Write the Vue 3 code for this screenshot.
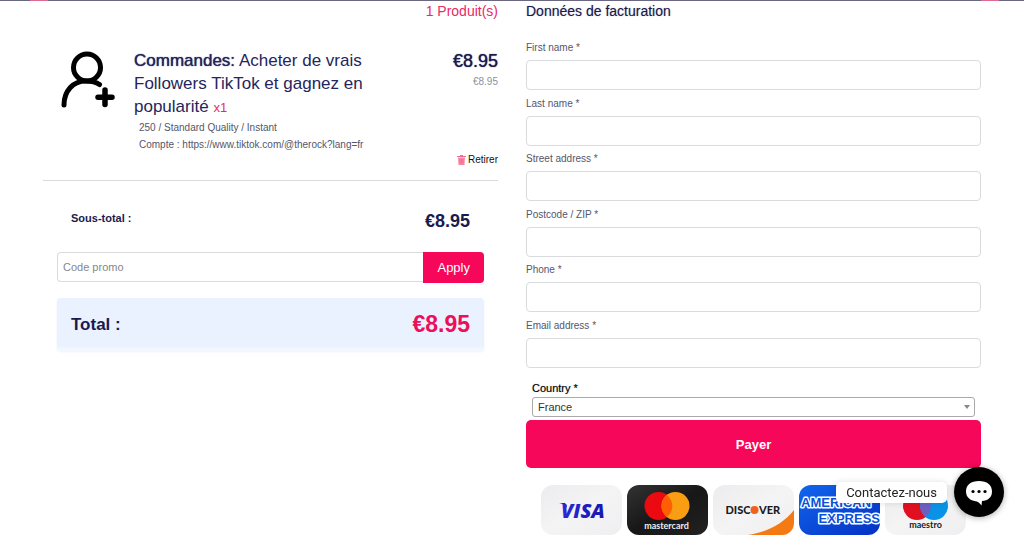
<script setup>
import { ref } from 'vue'

const fields = ref([
  { id: 'first-name', label: 'First name *', type: 'text', value: '' },
  { id: 'last-name', label: 'Last name *', type: 'text', value: '' },
  { id: 'street', label: 'Street address *', type: 'text', value: '' },
  { id: 'postcode', label: 'Postcode / ZIP *', type: 'text', value: '' },
  { id: 'phone', label: 'Phone *', type: 'tel', value: '' },
  { id: 'email', label: 'Email address *', type: 'email', value: '' },
])
const countries = ['France', 'Belgique', 'Suisse', 'Canada']
const country = ref('France')
const promo = ref('')
</script>

<template>
  <div class="page">
    <header class="edge"><i></i><i></i></header>
    <main class="checkout">
      <section class="cart">
        <h2 class="count">1 Produit(s)</h2>
        <article class="item">
          <svg class="avatar" viewBox="0 0 56 60" fill="none" stroke="#000" stroke-width="5" stroke-linecap="round">
            <circle cx="26" cy="18.500" r="13.500" />
            <path d="M3 56C3 42 12 32 25 32c6 0 10 1 13.500 3.500" />
            <path stroke-width="5.500" d="M44 41v14.500M37 48.200h14" />
          </svg>
          <div class="info">
            <h3 class="name"><span class="medium">Commandes:</span> Acheter de vrais Followers TikTok et gagnez en popularité <span class="qty">x1</span></h3>
            <p class="meta">250 / Standard Quality / Instant</p>
            <p class="meta">Compte : https://www.tiktok.com/@therock?lang=fr</p>
          </div>
          <div class="price">
            <span class="now medium">€8.95</span>
            <span class="unit">€8.95</span>
          </div>
        </article>
        <div class="actions">
          <button class="remove" type="button">
            <svg width="9" height="10" viewBox="0 0 9 10">
              <path d="M3 1V0h3v1h3v1H0V1z" fill="#f56a94" />
              <path d="M1 2.600h7L7.500 10h-6z" fill="#fc86a8" />
              <path d="M3 4v4.500M4.500 4v4.500M6 4v4.500" stroke="#ea5580" stroke-width=".5" />
            </svg>
            Retirer
          </button>
        </div>
        <div class="summary">
          <div class="subtotal"><span>Sous-total :</span><strong>€8.95</strong></div>
          <form class="promo" @submit.prevent>
            <input v-model="promo" type="text" placeholder="Code promo" aria-label="Code promo" />
            <button type="submit">Apply</button>
          </form>
          <div class="total"><span>Total :</span><strong>€8.95</strong></div>
        </div>
      </section>

      <section class="billing">
        <h2 class="heading">Données de facturation</h2>
        <form @submit.prevent>
          <div v-for="f in fields" :key="f.id" class="field">
            <label :for="f.id">{{ f.label }}</label>
            <input :id="f.id" v-model="f.value" :type="f.type" />
          </div>
          <div class="country">
            <label for="country">Country *</label>
            <div class="picker">
              <select id="country" v-model="country">
                <option v-for="c in countries" :key="c">{{ c }}</option>
              </select>
              <svg class="caret" width="6" height="4" viewBox="0 0 6 4"><path d="M0 0h6L3 4z" fill="#888" /></svg>
            </div>
          </div>
          <button class="pay" type="submit">Payer</button>
        </form>
        <div class="cards">
          <svg viewBox="0 0 81 50" role="img" aria-label="Visa">
            <defs>
              <linearGradient id="pale" x1="0" y1="0" x2="1" y2="1"><stop offset="0" stop-color="#ececee" /><stop offset=".5" stop-color="#f4f4f5" /><stop offset="1" stop-color="#efeff1" /></linearGradient>
              <linearGradient id="visa" x1="0" y1="0" x2="1" y2="0"><stop offset="0" stop-color="#2a2ad8" /><stop offset="1" stop-color="#1a16b0" /></linearGradient>
            </defs>
            <rect width="81" height="50" rx="12" fill="url(#pale)" />
            <g fill="url(#visa)">
              <path d="M18 18h6l2 3v2l-1-2c-2-1.500-4-2.300-7-3z" />
              <text x="20" y="33" font-family="Open Sans, sans-serif" font-size="20" font-weight="800" font-style="italic">VISA</text>
            </g>
          </svg>
          <svg viewBox="0 0 81 50" role="img" aria-label="Mastercard">
            <defs><linearGradient id="dark" x1="0" y1="0" x2="1" y2="1"><stop offset="0" stop-color="#333" /><stop offset=".5" stop-color="#171717" /><stop offset="1" stop-color="#222" /></linearGradient></defs>
            <rect width="81" height="50" rx="12" fill="url(#dark)" />
            <circle cx="31.500" cy="21" r="14" fill="#eb0a10" />
            <circle cx="48.500" cy="21" r="14" fill="#f99d12" />
            <path d="M40 10a14 14 0 0 1 0 22a14 14 0 0 1 0-22z" fill="#ff5f00" />
            <text x="39.500" y="44" text-anchor="middle" font-family="Lato, sans-serif" font-size="9" font-weight="700" fill="#eee">mastercard</text>
          </svg>
          <svg viewBox="0 0 81 50" role="img" aria-label="Discover">
            <rect width="81" height="50" rx="12" fill="url(#pale)" />
            <path d="M35 50C54 47 70 39 81 25v13a12 12 0 0 1-12 12z" fill="#f47a14" />
            <g font-family="Lato, sans-serif" font-size="11" font-weight="900" fill="#1c1c1e">
              <text x="12.500" y="29">DISC</text>
              <text x="46" y="29">VER</text>
            </g>
            <circle cx="41.500" cy="25" r="4" fill="#f1601c" />
          </svg>
          <svg viewBox="0 0 81 50" role="img" aria-label="American Express">
            <defs>
              <linearGradient id="amex" x1="0" y1="0" x2="1" y2="1"><stop offset="0" stop-color="#1265ee" /><stop offset="1" stop-color="#0431c4" /></linearGradient>
              <clipPath id="amex-clip"><rect width="81" height="50" rx="12" /></clipPath>
            </defs>
            <rect width="81" height="50" rx="12" fill="url(#amex)" />
            <g clip-path="url(#amex-clip)" font-family="Liberation Sans, Arial, sans-serif" font-size="13" font-weight="700" fill="#0b50dc" stroke="#fff" stroke-width="2.800" stroke-linejoin="round" paint-order="stroke">
              <text x="2" y="22">AMERICAN</text>
              <text x="81" y="38" text-anchor="end">EXPRESS</text>
            </g>
          </svg>
          <svg viewBox="0 0 81 50" role="img" aria-label="Maestro">
            <rect width="81" height="50" rx="12" fill="url(#pale)" />
            <circle cx="32" cy="21" r="14" fill="#e01020" />
            <circle cx="49" cy="21" r="14" fill="#0a93e6" />
            <path d="M40.500 10a14 14 0 0 1 0 22a14 14 0 0 1 0-22z" fill="#6c5fc0" />
            <text x="40.500" y="43" text-anchor="middle" font-family="Lato, sans-serif" font-size="9" font-weight="700" fill="#222">maestro</text>
          </svg>
        </div>
      </section>
    </main>

    <aside class="contact">
      <span class="bubble">Contactez-nous</span>
      <button class="chat" type="button" aria-label="Contactez-nous">
        <svg width="28" height="28" viewBox="0 0 28 28">
          <path d="M14 3C6 3 1 7 1 13.500c0 6 4.500 9 9.500 9.700 2 .3 3.500 1 6 4.300l.5-4.400C23 22.500 27 19.500 27 13.500 27 7 22 3 14 3z" fill="#fff" />
          <circle cx="8" cy="13.500" r="1.600" /><circle cx="14" cy="13.500" r="1.600" /><circle cx="20" cy="13.500" r="1.600" />
        </svg>
      </button>
    </aside>
  </div>
</template>

<style>
body {
  margin: 0;
  background: #fff;
}
</style>

<style scoped>
.page {
  font-family: "Liberation Sans", Arial, Helvetica, sans-serif;
  font-size: 10px;
  color: #1b1a4e;
}
.page * {
  box-sizing: border-box;
}
h2, h3, p {
  margin: 0;
  font-weight: 400;
}
button, input, select {
  font-family: inherit;
  margin: 0;
}
.edge {
  display: flex;
  justify-content: space-between;
  height: 1px;
  padding: 0 25px 0 30px;
  background: #6a6783;
}
.edge i {
  width: 18px;
  background: #dc6a92;
}
.checkout {
  display: grid;
  grid-template-columns: 1fr 1fr;
  gap: 28px;
  padding: 0 43px;
}
.count, .heading {
  font-size: 14px;
  line-height: 20px;
}
.count {
  text-align: right;
  color: #e82a66;
}
.heading {
  color: #1b1a4e;
  text-shadow: 0 0 1px #1b1a4e66;
}
.medium {
  text-shadow: 0 0 1px #1b1a4e;
}
.item {
  display: flex;
  margin-top: 28px;
}
.avatar {
  flex: none;
  width: 56px;
  height: 60px;
  margin: 0 17px 0 18px;
}
.info {
  flex: 1;
}
.name {
  font-size: 17px;
  line-height: 23px;
  color: #26255c;
}
.qty {
  font-size: 13px;
  color: #e82a66;
}
.meta {
  padding-left: 5px;
  line-height: 17px;
  color: #54566a;
}
.price {
  display: flex;
  flex-direction: column;
  align-items: flex-end;
  margin-left: 60px;
}
.now {
  font-size: 18px;
  line-height: 24px;
}
.unit {
  line-height: 18px;
  color: #8e8f9c;
}
.actions {
  display: flex;
  justify-content: flex-end;
  padding-bottom: 14px;
  border-bottom: 1px solid #d9dadc;
}
.remove {
  display: flex;
  align-items: center;
  gap: 2px;
  padding: 0;
  border: 0;
  background: none;
  font-size: 10px;
  line-height: 13px;
  color: #111;
}
.summary {
  padding: 27px 14px 0;
}
.subtotal, .total {
  display: flex;
  justify-content: space-between;
  padding: 0 14px;
  font-weight: 700;
}
.subtotal span {
  font-size: 11px;
  line-height: 20px;
}
.subtotal strong {
  font-size: 18px;
  line-height: 26px;
}
.promo {
  display: flex;
  align-items: flex-start;
  margin-top: 18px;
}
.promo input {
  flex: 1;
  min-width: 0;
  height: 30px;
  padding: 0 5px;
  border: 1px solid #d9dbdf;
  border-right: 0;
  border-radius: 4px 0 0 4px;
  font-size: 11px;
  color: #333;
}
.promo input::placeholder {
  color: #85888c;
}
.promo button {
  height: 31px;
  padding: 0 14px;
  border: 0;
  border-radius: 0 4px 4px 0;
  background: #f70759;
  color: #fff;
  font-size: 13px;
}
.total {
  align-items: center;
  height: 53px;
  margin-top: 15px;
  border-radius: 4px;
  background: linear-gradient(#ebf2ff 90%, #f5f9ff);
  box-shadow: 0 1px 3px #ebf2ff;
}
.total span {
  font-size: 17px;
}
.total strong {
  font-size: 23px;
  color: #ec0f5a;
}
.billing form {
  padding-top: 20px;
}
.field {
  margin-bottom: 6px;
}
.field:nth-child(odd) {
  margin-bottom: 7px;
}
.field label {
  display: block;
  margin-bottom: 5px;
  line-height: 14px;
  color: #54566a;
}
.field input {
  display: block;
  width: 100%;
  height: 30px;
  padding: 0 8px;
  border: 1px solid #d9dbdf;
  border-radius: 4px;
  background: #fff;
}
.country {
  padding: 7px 6px 0;
}
.country label {
  display: block;
  margin-bottom: 2px;
  font-size: 11px;
  line-height: 14px;
  color: #000;
  text-shadow: 0 0 1px #0006;
}
.picker {
  position: relative;
}
.picker select {
  display: block;
  width: 100%;
  height: 20px;
  padding: 0 5px;
  appearance: none;
  border: 1px solid #aaa;
  border-radius: 3px;
  background: #fff;
  font-size: 11px;
  color: #333;
}
.caret {
  position: absolute;
  top: 8px;
  right: 5px;
  pointer-events: none;
}
.pay {
  display: block;
  width: 100%;
  height: 48px;
  margin-top: 3px;
  border: 0;
  border-radius: 5px;
  background: #f70759;
  color: #fff;
  font-size: 13px;
  font-weight: 700;
}
.cards {
  display: flex;
  gap: 5px;
  padding: 17px 15px 0;
}
.cards svg {
  display: block;
  flex: 1;
  min-width: 0;
}
.contact {
  position: fixed;
  right: 20px;
  bottom: 18px;
  display: flex;
  align-items: center;
  gap: 7px;
}
.bubble {
  padding: 0 10px;
  border-radius: 5px;
  background: #fff;
  box-shadow: 0 0 6px #0000001f;
  font-family: Roboto, sans-serif;
  font-size: 13px;
  line-height: 21px;
  color: #222;
}
.chat {
  display: grid;
  place-items: center;
  width: 50px;
  height: 50px;
  padding: 0;
  border: 0;
  border-radius: 50%;
  background: #000;
  box-shadow: 0 1px 6px #0005;
}
</style>
